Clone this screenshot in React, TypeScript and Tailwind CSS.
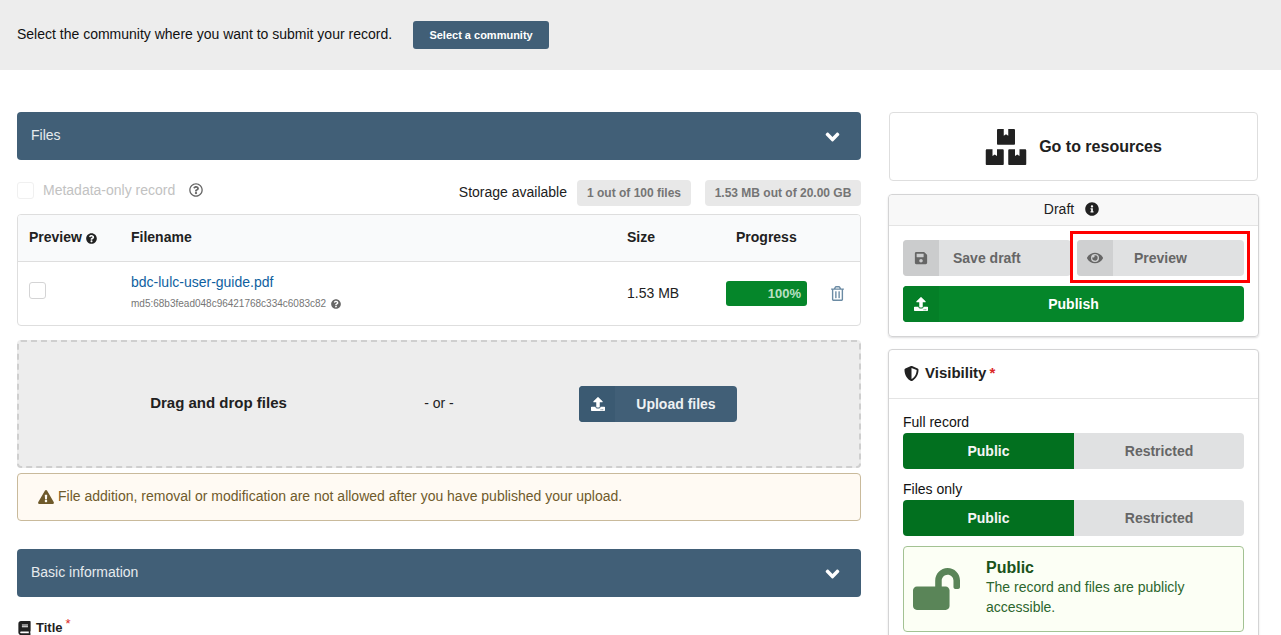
import {
  FaAngleDown,
  FaBook,
  FaBoxes,
  FaExclamationTriangle,
  FaEye,
  FaInfoCircle,
  FaLockOpen,
  FaQuestionCircle,
  FaRegQuestionCircle,
  FaRegTrashAlt,
  FaSave,
  FaShieldAlt,
  FaUpload,
} from 'react-icons/fa';

function SectionBar({ title }: { title: string }) {
  return (
    <div className="h-12 rounded-[4px] bg-[#415f77] pl-[14px] pr-[19px] flex items-center justify-between text-[14px] text-[#e6ebee]">
      <span className="-mt-[2px]">{title}</span>
      <FaAngleDown className="w-[19px] h-[22px] text-white mt-[2px]" />
    </div>
  );
}

function ToggleRow({ label }: { label: string }) {
  return (
    <>
      <div className="text-[14px] leading-[20px] h-[21px] text-[#111]">{label}</div>
      <div className="flex h-9 text-[14px] font-bold">
        <div className="w-[171px] bg-[#02701f] text-[#f5f5f5] rounded-l-[4px] flex items-center justify-center">Public</div>
        <div className="flex-1 bg-[#e0e1e2] text-[#666] rounded-r-[4px] flex items-center justify-center">Restricted</div>
      </div>
    </>
  );
}

export default function App() {
  return (
    <div className="w-[1281px] h-[635px] overflow-hidden bg-white text-[14px] text-[#212121] font-['Liberation_Sans',Arial,sans-serif]">
      {/* Community banner */}
      <div className="h-[70px] bg-[#ededed] pl-[17px] flex items-center text-[#111]">
        <span className="-mt-[2px]">Select the community where you want to submit your record.</span>
        <button className="ml-[21px] w-[136px] h-[28px] rounded-[3px] bg-[#415f77] text-white text-[11px] font-bold">Select a community</button>
      </div>

      <div className="flex pt-[42px] pl-[17px]">
        {/* Left column */}
        <div className="w-[844px]">
          <SectionBar title="Files" />

          <div className="h-[54px] flex items-center pt-[12px]">
            <div className="w-[17px] h-[17px] rounded-[3px] border border-[#f0f0f0] -mt-[5px]" />
            <span className="ml-[9px] text-[#c2c2c2] -mt-[5px]">Metadata-only record</span>
            <FaRegQuestionCircle className="ml-[14px] w-[14px] h-[14px] text-[#666] -mt-[6px]" />
            <span className="ml-auto -mt-[2px]">Storage available</span>
            <span className="ml-[10px] w-[114px] h-[26px] justify-center rounded-[4px] bg-[#e8e8e8] text-[#757575] text-[12px] font-bold flex items-center">1 out of 100 files</span>
            <span className="ml-[14px] w-[156px] h-[26px] justify-center rounded-[4px] bg-[#e8e8e8] text-[#757575] text-[12px] font-bold flex items-center">1.53 MB out of 20.00 GB</span>
          </div>

          {/* Files table */}
          <div className="h-[112px] rounded-[4px] border border-[#dedede] overflow-hidden">
            <div className="h-[47px] pb-[2px] grid grid-cols-[113px_496px_99px_1fr] items-center bg-[#f9fafb] border-b border-[#dedede] font-bold">
              <div className="pl-[11px] flex items-center gap-[4px]">
                Preview
                <FaQuestionCircle className="w-[11px] h-[11px] mt-[2px]" />
              </div>
              <div>Filename</div>
              <div>Size</div>
              <div className="pl-[10px]">Progress</div>
            </div>
            <div className="h-[63px] grid grid-cols-[113px_496px_99px_1fr] items-center">
              <div className="pl-[11px] -mt-[6px]">
                <div className="w-[17px] h-[17px] rounded-[3px] border border-[#d4d4d5]" />
              </div>
              <div className="-mt-[3px]">
                <div className="text-[#0f5f9f] leading-[20px]">bdc-lulc-user-guide.pdf</div>
                <div className="mt-[4px] flex items-center gap-[5px] text-[10px] leading-[16px] text-[#767676]">
                  md5:68b3fead048c96421768c334c6083c82
                  <FaQuestionCircle className="w-[10px] h-[10px] text-[#666]" />
                </div>
              </div>
              <div>1.53 MB</div>
              <div className="flex items-center">
                <div className="w-[81px] h-[25px] rounded-[3px] bg-[#05862a] text-[#b9e0c4] text-[13px] font-bold flex items-center justify-end pr-[6px]">100%</div>
                <FaRegTrashAlt className="ml-[24px] w-[13px] h-[15px] text-[#6b8ba4]" />
              </div>
            </div>
          </div>

          {/* Drop zone */}
          <div className="mt-[14px] h-[128px] rounded-[4px] border-2 border-dashed border-[#cfcfcf] bg-[#ededed] flex items-center">
            <div className="w-[399px] text-center text-[15px] font-bold -mt-[1px]">Drag and drop files</div>
            <div className="w-[42px] text-center -mt-[1px]">- or -</div>
            <div className="ml-[119px] w-[158px] h-9 rounded-[4px] overflow-hidden bg-[#415f77] text-white flex items-center font-bold">
              <div className="w-9 h-9 bg-[#3b5a72] flex items-center justify-center">
                <FaUpload className="w-[14px] h-[14px] ml-[2px] -mt-[1px]" />
              </div>
              <div className="flex-1 text-center text-[#eef1f3]">Upload files</div>
            </div>
          </div>

          {/* Warning */}
          <div className="mt-[5px] h-[48px] rounded-[4px] border border-[#c9ba9b] bg-[#fffaf3] pl-[20px] flex items-center text-[#6f5a2b]">
            <FaExclamationTriangle className="w-4 h-[14px] text-[#6f5a2b] mr-[4px] -mt-[1px]" />
            <span className="-mt-[2px]">File addition, removal or modification are not allowed after you have published your upload.</span>
          </div>

          <div className="mt-[28px]">
            <SectionBar title="Basic information" />
          </div>

          <div className="mt-[21px] flex items-center text-[13px] font-bold">
            <FaBook className="w-[13px] h-[14px] ml-[1px] mr-[5px]" />
            Title
            <span className="text-[#db2828] ml-[3px] -mt-[8px] font-normal">*</span>
          </div>
        </div>

        {/* Right column */}
        <div className="ml-[27px] w-[371px]">
          <div className="ml-[1px] w-[369px] h-[69px] rounded-[4px] border border-[#dedede] flex items-center justify-center gap-[12px]">
            <FaBoxes className="w-[42px] h-[36px] text-[#212121]" />
            <span className="text-[16px] font-bold">Go to resources</span>
          </div>

          {/* Draft card */}
          <div className="mt-[13px] h-[143px] rounded-[4px] border border-[#d4d4d5] shadow-[0_1px_2px_rgba(34,36,38,0.15)]">
            <div className="h-[31px] rounded-t-[4px] bg-[#f8f8f8] border-b border-[#e4e4e4] flex items-center justify-center gap-[11px] pr-[4px] pb-[2px] text-[#212121]">
              Draft
              <FaInfoCircle className="w-[14px] h-[14px]" />
            </div>
            <div className="px-[14px] pt-[14px]">
              <div className="flex gap-[6px] text-[14px] font-bold text-[#666]">
                <div className="w-[168px] h-9 rounded-[4px] bg-[#e0e1e2] overflow-hidden flex items-center">
                  <div className="w-9 h-9 bg-[#cbcccd] flex items-center justify-center">
                    <FaSave className="w-[14px] h-[14px]" />
                  </div>
                  <span className="ml-[14px]">Save draft</span>
                </div>
                <div className="relative w-[167px] h-9 rounded-[4px] bg-[#e0e1e2] flex items-center">
                  <div className="w-9 h-9 rounded-l-[4px] bg-[#cfd0d1] flex items-center justify-center">
                    <FaEye className="w-4 h-4" />
                  </div>
                  <span className="ml-[21px]">Preview</span>
                  <div className="absolute -left-[7px] -right-[6px] -top-[9px] -bottom-[7px] border-[3px] border-[#f00]" />
                </div>
              </div>
              <div className="mt-[10px] h-9 rounded-[4px] overflow-hidden bg-[#05862a] text-white font-bold flex items-center">
                <div className="w-9 h-9 bg-[#047f27] flex items-center justify-center">
                  <FaUpload className="w-[14px] h-[14px]" />
                </div>
                <span className="flex-1 text-center pr-[36px]">Publish</span>
              </div>
            </div>
          </div>

          {/* Visibility card */}
          <div className="mt-[12px] h-[320px] rounded-[4px] border border-[#d4d4d5] shadow-[0_1px_2px_rgba(34,36,38,0.15)]">
            <div className="h-[49px] border-b border-[#e4e4e4] pl-[15px] pb-[2px] flex items-center text-[15px] font-bold">
              <FaShieldAlt className="w-[15px] h-[15px] mr-[6px]" />
              Visibility
              <span className="text-[#db2828] ml-[3px]">*</span>
            </div>
            <div className="px-[14px] pt-[13px]">
              <ToggleRow label="Full record" />
              <div className="h-[10px]" />
              <ToggleRow label="Files only" />
              <div className="mt-[10px] h-[86px] rounded-[4px] border border-[#a3c293] bg-[#fcfff5] flex text-[#2c662d]">
                <div className="w-[82px] pl-[9px] pt-[21px]">
                  <FaLockOpen className="w-[47px] h-[42px] text-[#5a8558]" />
                </div>
                <div className="pt-[11px]">
                  <div className="text-[16px] leading-[20px] font-bold text-[#1a531b]">Public</div>
                  <div className="-mt-[1px] leading-[20px] w-[230px]">The record and files are publicly accessible.</div>
                </div>
              </div>
            </div>
          </div>
        </div>
      </div>
    </div>
  );
}
